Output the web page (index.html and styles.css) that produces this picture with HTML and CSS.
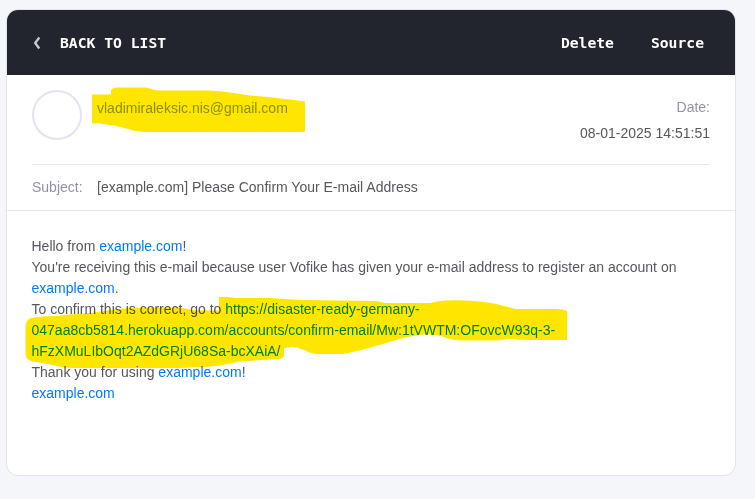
FILE: index.html
```html
<!DOCTYPE html>
<html lang="en">
<head>
<meta charset="utf-8">
<title>Message</title>
<link rel="stylesheet" href="styles.css">
</head>
<body>
<main class="card">
  <header class="toolbar">
    <a class="back"><svg class="chevron" width="8" height="14" viewBox="0 0 8 14"><path d="M6.300 1.500 2.200 7l4.100 5.500"/></svg><span>BACK TO LIST</span></a>
    <nav class="actions"><a>Delete</a><a>Source</a></nav>
  </header>
  <section class="info">
    <div class="sender">
      <div class="avatar"></div>
      <div class="email">vladimiraleksic.nis@gmail.com</div>
      <div class="date"><span class="label">Date:</span><span>08-01-2025 14:51:51</span></div>
    </div>
    <div class="subject"><span class="label">Subject:</span><span>[example.com] Please Confirm Your E-mail Address</span></div>
  </section>
  <article class="message">
    Hello from <a>example.com</a>!<br>
    You're receiving this e-mail because user Vofike has given your e-mail address to register an account on <a>example.com</a>.<br>
    To confirm this is correct, go to <a class="confirm">https://disaster-ready-germany-<br>047aa8cb5814.herokuapp.com/accounts/confirm-email/Mw:1tVWTM:OFovcW93q-3-<br>hFzXMuLIbOqt2AZdGRjU68Sa-bcXAiA/</a><br>
    Thank you for using <a>example.com</a>!<br>
    <a>example.com</a>
  </article>
</main>
<svg class="marker" width="755" height="499" viewBox="0 0 755 499">
  <path d="M92 94.500H111V90Q112 88 117 87.500H145Q150 88 153 89.500Q156 90.500 160 90.500H210Q222 91 250 95.500Q270 97 305 101.500V131L304 132H143Q136 132 128 129Q114 125 100 123.500H92Z"/>
  <path d="M219 297H230L234 298H270L300 300L376 301L386 303H430Q438 300.500 447 300.500Q485 299 515 309H556Q563 309 567 311V340H530Q520 340 510 339L497 340.500H460Q450 340 444 337Q436 334 428 334.500Q418 334 400 339L367 348.500Q346 354 340 354H318Q312 354 304 350Q293 345 288 347.500L284 348V355Q284 359 278 359L240 361.500Q215 367 200 367L180 368H75Q62 368 52 365Q43 362.500 33 361.500Q25.500 360 25.500 354V326Q26 320 31 318Q40 316 59 316Q64 314.500 80 314Q100 312 118 309Q135 307 180 307.500Q190 310 200 310.500H219Z"/>
</svg>
</body>
</html>
```

FILE: styles.css
```css
* { box-sizing: border-box; }
body {
  margin: 0;
  padding: 9px 19px 0 6px;
  height: 499px;
  background: #f5f6f9;
  color: #55585f;
  font: 14px/21px "Liberation Sans", Arial, sans-serif;
}
.card {
  height: 467px;
  background: #fff;
  border: 1px solid #e2e3ed;
  border-radius: 12px;
  overflow: hidden;
}
.toolbar {
  height: 65px;
  padding: 1px 31px 0 25px;
  display: flex;
  align-items: center;
  justify-content: space-between;
  background: #22252e;
  color: #fff;
  font: bold 14.7px/20px "DejaVu Sans Mono", monospace;
}
.back { display: flex; align-items: center; gap: 19px; }
.chevron { fill: none; stroke: #c5c7d2; stroke-width: 2.4; margin-left: 1px; }
.actions { display: flex; gap: 37px; }
.info { height: 136px; padding: 0 25px; border-bottom: 1px solid #e6e6f0; }
.sender {
  height: 90px;
  padding-top: 15px;
  display: flex;
  border-bottom: 1px solid #e6e6f0;
}
.avatar { width: 50px; height: 50px; border: 2px solid #e4e3ef; border-radius: 50%; }
.email { margin: 8px 0 0 15px; color: #8b9fa0; }
.date { margin: 4px 0 0 auto; display: flex; flex-direction: column; text-align: right; line-height: 26px; }
.label { color: #9194a6; }
.subject { display: flex; gap: 14.500px; padding-top: 12px; }
.message { padding: 25px 32px 0 24.500px; }
.message a { color: #007bff; }
.message .confirm { color: #008eff; }
.marker { position: absolute; left: 0; top: 0; fill: #ffe600; mix-blend-mode: multiply; pointer-events: none; }
```
